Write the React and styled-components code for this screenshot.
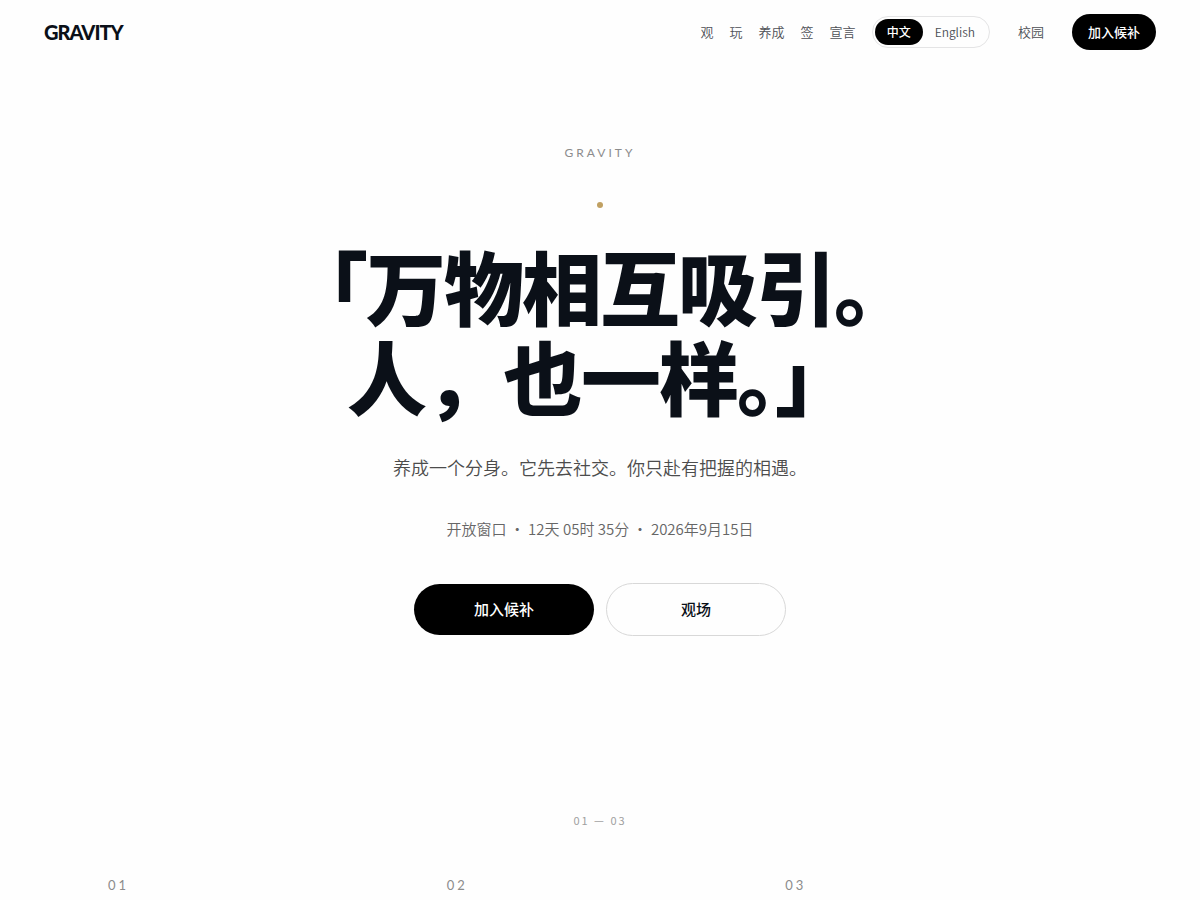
import React from "react";
import styled, { createGlobalStyle } from "styled-components";

const cjk = `"Noto Sans CJK SC", sans-serif`;
const display = `Lato, "Noto Sans CJK SC", sans-serif`;

const GlobalStyle = createGlobalStyle`
  *, *::before, *::after { box-sizing: border-box; }
  body {
    margin: 0;
    background: #fefefe;
    color: #0b1018;
    font-family: ${cjk};
    font-weight: 350;
    overflow-x: hidden;
  }
  a { color: inherit; text-decoration: none; }
  button { font-family: inherit; cursor: pointer; }
`;

const Header = styled.header`
  display: flex;
  align-items: center;
  justify-content: space-between;
  height: 64px;
  padding: 0 44px;
`;

const Logo = styled.a`
  font-family: ${display};
  font-size: 20px;
  line-height: 24px;
  font-weight: 900;
  letter-spacing: -1px;
`;

const HeaderEnd = styled.div`
  display: flex;
  align-items: center;
  gap: 28px;
`;

const Nav = styled.nav`
  display: flex;
  align-items: center;
  gap: 16px;
`;

const NavLink = styled.a`
  font-size: 13px;
  line-height: 20px;
  color: #4c4f55;
`;

const LanguageSwitch = styled.div`
  display: flex;
  padding: 2px;
  border: 1px solid #e4e4e5;
  border-radius: 999px;
`;

const LanguageButton = styled.button`
  padding: 4px 12px;
  border: 0;
  border-radius: 999px;
  font-size: 12px;
  line-height: 18px;
  font-weight: ${(p) => (p.$active ? 500 : 350)};
  color: ${(p) => (p.$active ? "#fff" : "#4c4f55")};
  background: ${(p) => (p.$active ? "#000" : "transparent")};
`;

const JoinLink = styled.a`
  padding: 8px 16px;
  border-radius: 999px;
  background: #000;
  color: #fff;
  font-size: 13px;
  line-height: 20px;
  font-weight: 500;
`;

const Hero = styled.section`
  display: flex;
  flex-direction: column;
  align-items: center;
  padding: 80px 24px 176px;
  text-align: center;
`;

const Eyebrow = styled.p`
  margin: 0;
  font-family: ${display};
  font-size: 12px;
  line-height: 18px;
  font-weight: 400;
  letter-spacing: 3px;
  color: #8c8c8c;
`;

const Dot = styled.span`
  width: 6px;
  height: 6px;
  margin: 40px 0 31px;
  border-radius: 50%;
  background: #c0a062;
`;

const Title = styled.h1`
  margin: 0;
  font-size: 80px;
  line-height: 90px;
  font-weight: 900;
  letter-spacing: -2px;
`;

const Lead = styled.p`
  margin: 33px 0 0;
  font-size: 18px;
  line-height: 30px;
  color: #4c4c4c;
`;

const OpeningWindow = styled.p`
  margin: 34px 0 0;
  font-size: 15px;
  line-height: 26px;
  color: #666;
`;

const Actions = styled.div`
  display: flex;
  flex-wrap: wrap;
  align-items: center;
  justify-content: center;
  gap: 12px;
  margin-top: 41px;
`;

const ActionLink = styled.a`
  min-width: 180px;
  padding: 13px 32px 15px;
  border: ${(p) => (p.$outline ? "1px solid #d8d8d8" : "0")};
  border-radius: 999px;
  font-size: 15px;
  line-height: 23px;
  font-weight: 500;
  color: ${(p) => (p.$outline ? "#0b1018" : "#fff")};
  background: ${(p) => (p.$outline ? "transparent" : "#000")};
`;

const Steps = styled.section`
  max-width: 1080px;
  margin: 0 auto;
  padding: 0 48px;
`;

const StepsRange = styled.p`
  margin: 0 0 48px;
  text-align: center;
  font-size: 11px;
  line-height: 16px;
  font-weight: 400;
  letter-spacing: 2px;
  color: #a0a0a0;
`;

const StepGrid = styled.div`
  display: grid;
  grid-template-columns: repeat(3, 1fr);
  gap: 32px;
`;

const StepNumber = styled.span`
  font-family: ${display};
  font-size: 13px;
  line-height: 18px;
  font-weight: 400;
  letter-spacing: 3px;
  color: #8c8c8c;
`;

const links = ["观", "玩", "养成", "签", "宣言"];
const steps = ["01", "02", "03"];

export default function App() {
  return (
    <>
      <GlobalStyle />
      <Header>
        <Logo href="#">GRAVITY</Logo>
        <HeaderEnd>
          <Nav>
            {links.map((label) => (
              <NavLink key={label} href="#">{label}</NavLink>
            ))}
            <LanguageSwitch>
              <LanguageButton type="button" $active>中文</LanguageButton>
              <LanguageButton type="button">English</LanguageButton>
            </LanguageSwitch>
          </Nav>
          <NavLink href="#">校园</NavLink>
          <JoinLink href="#">加入候补</JoinLink>
        </HeaderEnd>
      </Header>
      <main>
        <Hero>
          <Eyebrow>GRAVITY</Eyebrow>
          <Dot />
          <Title>
            「万物相互吸引。
            <br />
            人，也一样。」
          </Title>
          <Lead>养成一个分身。它先去社交。你只赴有把握的相遇。</Lead>
          <OpeningWindow>开放窗口 · 12天 05时 35分 · 2026年9月15日</OpeningWindow>
          <Actions>
            <ActionLink href="#">加入候补</ActionLink>
            <ActionLink href="#" $outline>观场</ActionLink>
          </Actions>
        </Hero>
        <Steps>
          <StepsRange>01 — 03</StepsRange>
          <StepGrid>
            {steps.map((n) => (
              <StepNumber key={n}>{n}</StepNumber>
            ))}
          </StepGrid>
        </Steps>
      </main>
    </>
  );
}
